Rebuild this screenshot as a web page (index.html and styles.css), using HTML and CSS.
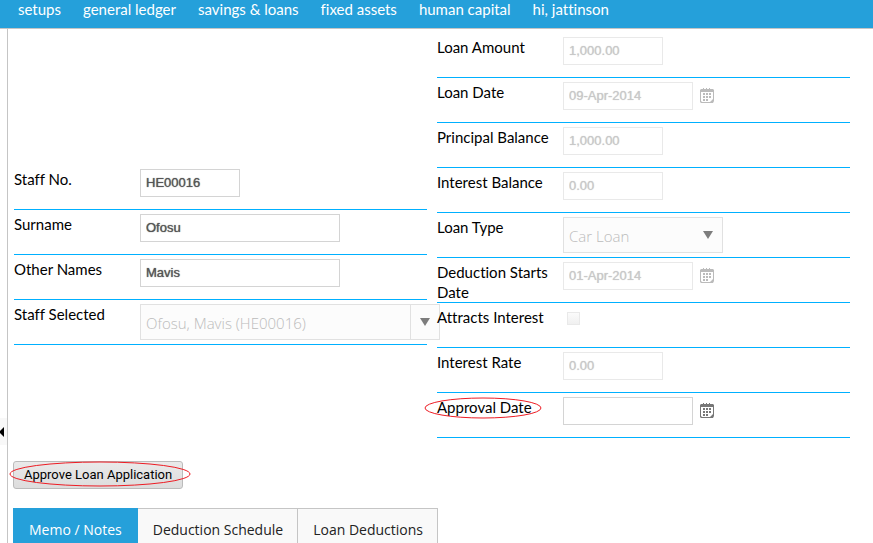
FILE: index.html
```html
<!DOCTYPE html>
<html lang="en">
<head>
<meta charset="utf-8">
<title>Loan Approval</title>
<link rel="stylesheet" href="styles.css">
</head>
<body>
<svg class="sprite" aria-hidden="true">
  <symbol id="calendar" viewBox="0 0 14 15">
    <path fill="currentColor" fill-rule="evenodd" d="M1 1h2V0h1v1h2V0h1v1h2V0h1v1h3l1 1v11l-1 2H1l-1-1V2zM1 4v9l1 1h8l3-3V4zM3 5h2v2H3zM6 5h2v2H6zM9 5h2v2H9zM3 8h2v2H3zM6 8h2v2H6zM9 8h2v2H9zM3 11h2v2H3zM6 11h2v2H6z"/>
  </symbol>
</svg>
<nav class="topbar">
  <a href="#">setups</a>
  <a href="#">general ledger</a>
  <a href="#">savings &amp; loans</a>
  <a href="#">fixed assets</a>
  <a href="#">human capital</a>
  <a href="#">hi, jattinson</a>
</nav>
<div class="shell">
  <aside class="rail">
    <button class="collapse" type="button" aria-label="Expand side panel"><svg viewBox="0 0 4 10"><path d="M4 0v10L-1 5z"/></svg></button>
  </aside>
  <main class="content">
    <form class="form">
      <div class="column staff">
        <div class="row"><label for="staffno">Staff No.</label><input class="short" id="staffno" value="HE00016"></div>
        <div class="row"><label for="surname">Surname</label><input class="long" id="surname" value="Ofosu"></div>
        <div class="row"><label for="other">Other Names</label><input class="long" id="other" value="Mavis"></div>
        <div class="row"><label for="staff">Staff Selected</label>
          <span class="combo combo-wide"><select id="staff" disabled><option>Ofosu, Mavis (HE00016)</option></select></span></div>
      </div>
      <div class="column">
        <div class="row"><label for="amount">Loan Amount</label><input class="short" id="amount" value="1,000.00" disabled></div>
        <div class="row"><label for="loandate">Loan Date</label><input class="date" id="loandate" value="09-Apr-2014" disabled><button class="pick" type="button" aria-label="Pick loan date" disabled><svg><use href="#calendar"/></svg></button></div>
        <div class="row"><label for="principal">Principal Balance</label><input class="short" id="principal" value="1,000.00" disabled></div>
        <div class="row"><label for="interest">Interest Balance</label><input class="short" id="interest" value="0.00" disabled></div>
        <div class="row"><label for="type">Loan Type</label>
          <span class="combo"><select id="type" disabled><option>Car Loan</option></select></span></div>
        <div class="row"><label for="starts">Deduction Starts Date</label><input class="date" id="starts" value="01-Apr-2014" disabled><button class="pick" type="button" aria-label="Pick start date" disabled><svg><use href="#calendar"/></svg></button></div>
        <div class="row"><label for="attracts">Attracts Interest</label><input id="attracts" type="checkbox" disabled></div>
        <div class="row"><label for="rate">Interest Rate</label><input class="short" id="rate" value="0.00" disabled></div>
        <div class="row"><label class="marked" for="approval">Approval Date<svg class="ring ring-label" viewBox="0 0 118 22" preserveAspectRatio="none"><ellipse cx="59" cy="11" rx="58" ry="10"/></svg></label><input class="date" id="approval"><button class="pick" type="button" aria-label="Pick approval date"><svg><use href="#calendar"/></svg></button></div>
      </div>
    </form>
    <button class="approve marked" type="button">Approve Loan Application<svg class="ring ring-button" viewBox="0 0 181 26" preserveAspectRatio="none"><ellipse cx="91" cy="13" rx="90" ry="12"/></svg></button>
    <div class="tabs" role="tablist">
      <button class="tab active" type="button" role="tab" aria-selected="true">Memo / Notes</button>
      <button class="tab" type="button" role="tab">Deduction Schedule</button>
      <button class="tab" type="button" role="tab">Loan Deductions</button>
    </div>
  </main>
</div>
</body>
</html>
```
FILE: styles.css
```css
* { box-sizing: border-box; }
body {
  margin: 0;
  height: 100vh;
  display: flex;
  flex-direction: column;
  overflow: hidden;
  background: #fff;
  color: #000;
  font: 15px/20px Lato, "Open Sans", sans-serif;
  font-variant-ligatures: none;
}
button, input, select { font: inherit; margin: 0; }
.sprite { display: none; }
.topbar {
  flex: none;
  display: flex;
  gap: 22px;
  padding: 0 18px 9px;
  background: #25a0da;
  border-bottom: 1px solid #c5c5c5;
}
.topbar a { color: #fff; text-decoration: none; line-height: 19px; }
.shell { flex: 1; display: flex; min-height: 0; }
.rail {
  flex: none;
  width: 8px;
  border-right: 1px solid #c5c5c5;
}
.collapse {
  width: 7px;
  margin-top: 389px;
  height: 27px;
  padding: 0;
  border: 0;
  background: #f8f8f8;
  display: flex;
  align-items: center;
}
.collapse svg { width: 4px; height: 10px; display: block; }
.content { flex: 1; min-width: 0; padding: 4px 23px 0 5px; }
.form {
  display: grid;
  grid-template-columns: repeat(2, minmax(0, 1fr));
  gap: 10px;
  margin-left: 1px;
}
.staff { padding-top: 132px; }
.row {
  display: flex;
  align-items: flex-start;
  height: 45px;
  padding-top: 4px;
  border-bottom: 1px solid #00b0ff;
}
.row label { flex: none; width: 116px; margin-right: 10px; position: relative; z-index: 1; }
.row input {
  height: 28px;
  padding: 0 5px 2px;
  border: 1px solid #d4d4d4;
  border-radius: 0;
  background: #fff;
  color: #555;
  font: 13px/24px "Liberation Sans", Arial, sans-serif;
  text-shadow: 0 0 1px currentColor;
}
.row input:disabled { border-color: #e9e9e9; color: #c8c8c8; }
.row .short { width: 100px; }
.row .long { width: 200px; }
.row .date { width: 130px; }
.row input[type="checkbox"] {
  appearance: none;
  width: 13px;
  height: 13px;
  margin: 5px 4px;
  padding: 0;
  background: linear-gradient(#fbfbfb, #f0f0f0);
}
.pick {
  width: 14px;
  height: 15px;
  margin: 6px 7px;
  padding: 0;
  border: 0;
  background: none;
  color: #777;
}
.pick:disabled { color: #bbb; }
.pick svg { display: block; width: 14px; height: 15px; }
.combo { position: relative; flex: none; width: 160px; height: 36px; }
.combo-wide { width: 300px; }
.combo select {
  appearance: none;
  width: 100%;
  height: 36px;
  padding: 2px 5px 0;
  border: 1px solid #e1e1e1;
  border-radius: 0;
  background: #fcfcfc;
  color: #bbb;
  opacity: 1;
  font: 300 15px/20px "Open Sans", sans-serif;
}
.combo::after {
  content: "";
  position: absolute;
  right: 10px;
  top: 14px;
  border: 5px solid transparent;
  border-top: 8px solid #7d7d7d;
  border-bottom: 0;
}
.combo-wide::before {
  content: "";
  position: absolute;
  right: 29px;
  top: 0;
  height: 100%;
  border-left: 1px solid #e1e1e1;
}
.marked { position: relative; }
.ring { position: absolute; overflow: visible; fill: none; stroke: #ed1c24; stroke-width: 1; pointer-events: none; }
.ring-label { left: -13px; top: 0; width: 118px; height: 22px; }
.ring-button { left: -5px; top: -1px; width: 181px; height: 26px; }
.approve {
  display: block;
  height: 28px;
  margin-top: 23px;
  padding: 0 10px;
  border: 1px solid #bbb;
  border-radius: 3px;
  background: linear-gradient(#eaeaea, #ddd);
  color: #000;
  font: 13px/26px Roboto, sans-serif;
}
.tabs { display: flex; margin-top: 19px; }
.tab {
  height: 44px;
  padding: 0 14px 0 15px;
  border: 1px solid #c5c5c5;
  border-left: 0;
  background: #f9f9f9;
  color: #222;
  font: 14px/20px "Open Sans", sans-serif;
}
.tab.active { padding: 0 16px; border: 0; background: #25a0da; color: #fff; }
```
